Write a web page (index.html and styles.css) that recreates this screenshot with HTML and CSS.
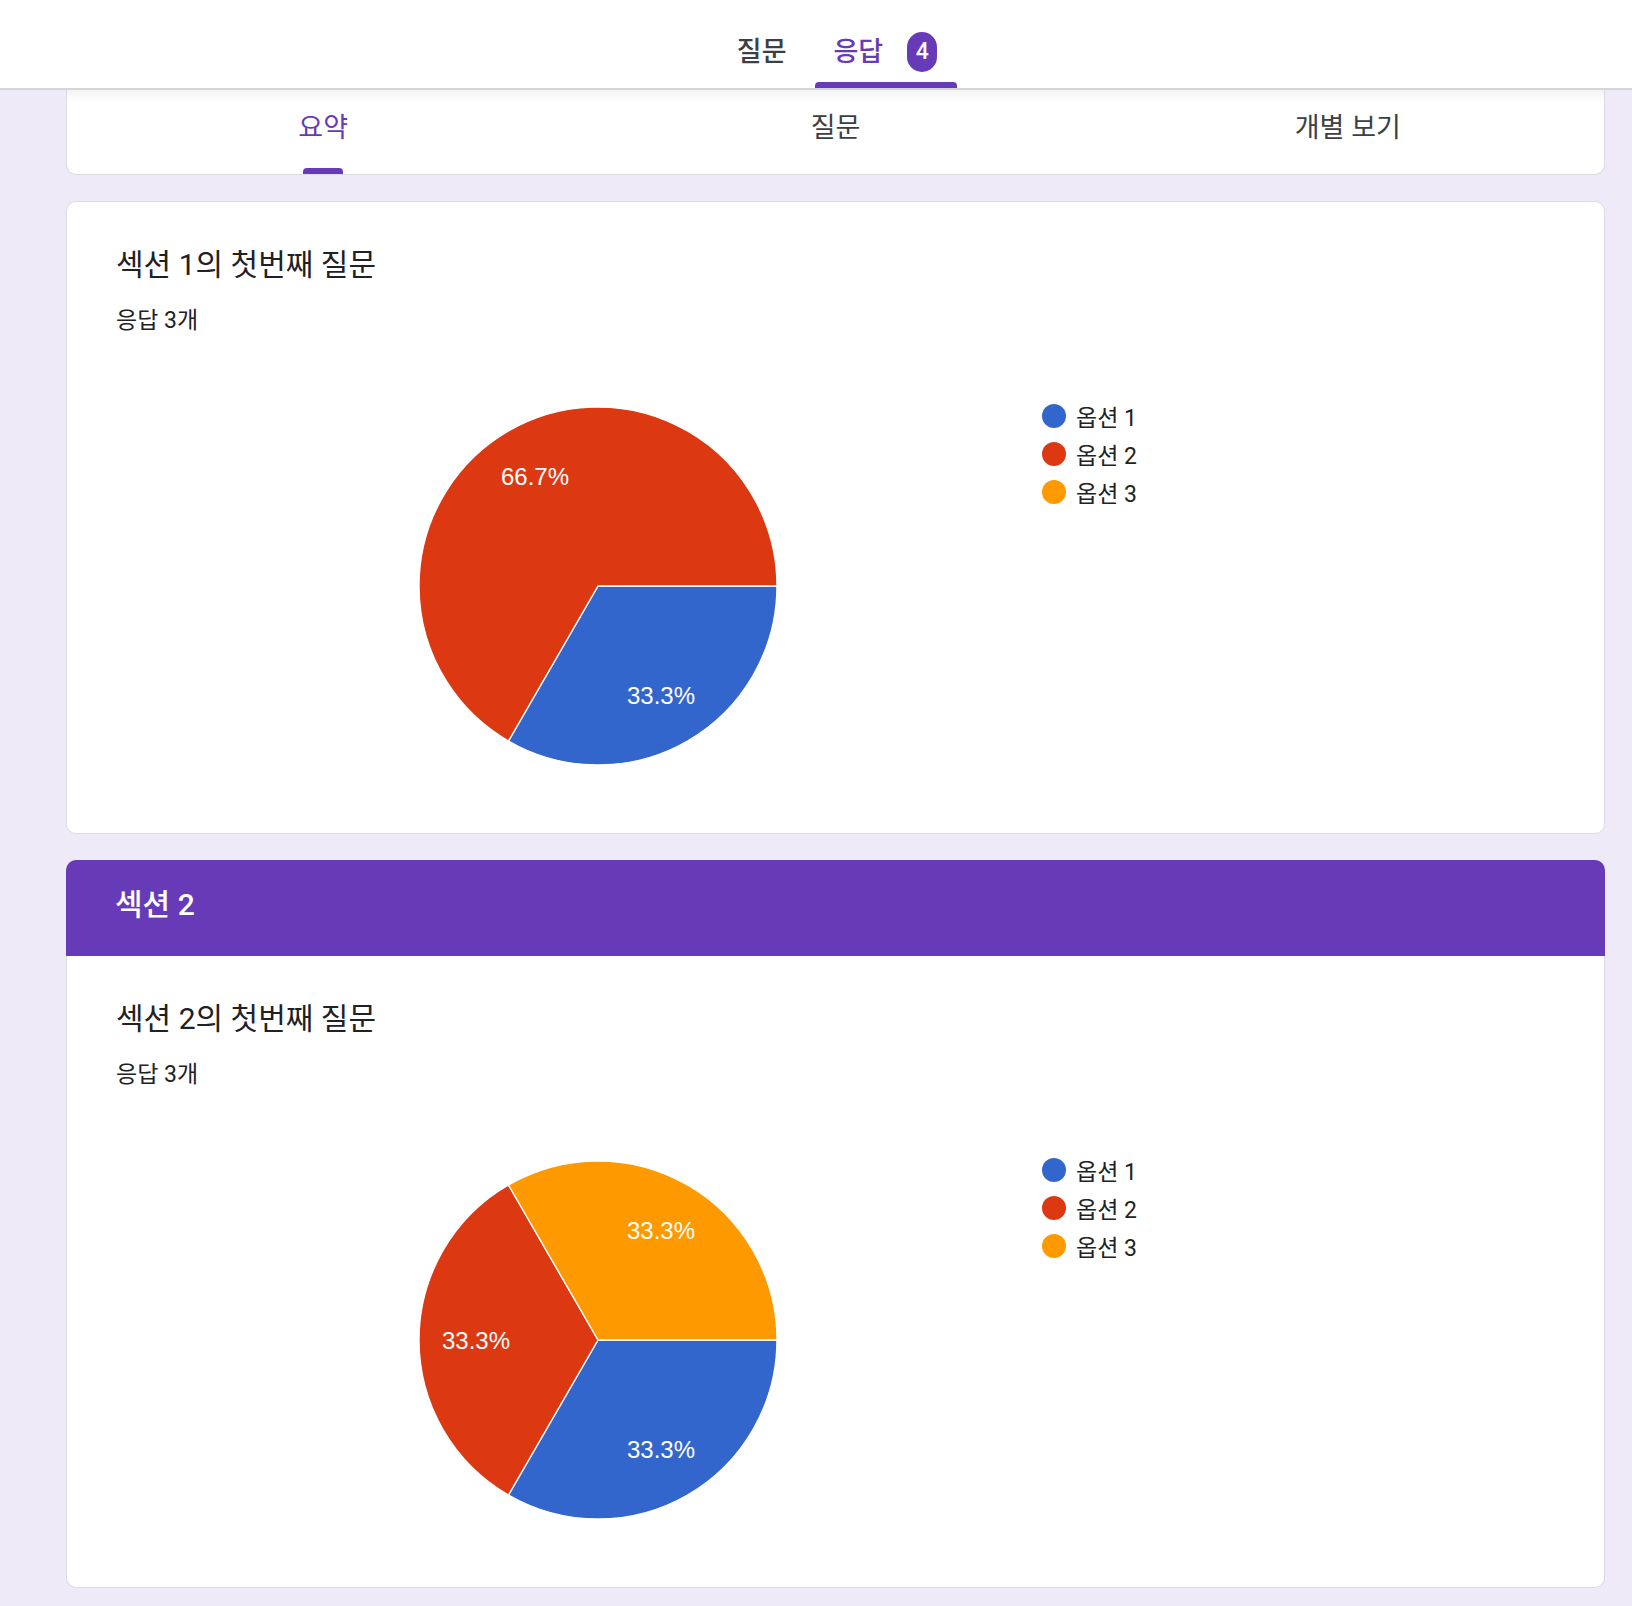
FILE: index.html
```html
<!DOCTYPE html>
<html lang="ko">
<head>
<meta charset="utf-8">
<title>응답 요약</title>
<link rel="stylesheet" href="styles.css">
</head>
<body>
<header class="topbar">
  <nav class="top-tabs">
    <div class="top-tab">
      <div class="top-tab-label">질문</div>
      <div class="top-tab-bar"></div>
    </div>
    <div class="top-tab is-active">
      <div class="top-tab-label">응답<span class="badge">4</span></div>
      <div class="top-tab-bar"></div>
    </div>
  </nav>
</header>

<main class="content">
  <div class="subtabs">
    <div class="subtab is-active">
      <div class="subtab-label">요약</div>
      <div class="subtab-bar"></div>
    </div>
    <div class="subtab">
      <div class="subtab-label">질문</div>
      <div class="subtab-bar"></div>
    </div>
    <div class="subtab">
      <div class="subtab-label">개별 보기</div>
      <div class="subtab-bar"></div>
    </div>
  </div>

  <section class="card">
    <h2 class="q-title">섹션 1의 첫번째 질문</h2>
    <div class="q-count">응답 3개</div>
    <div class="chart-row">
      <svg class="pie" width="360" height="360" viewBox="0 0 360 360">
        <path class="slice-blue" d="M180,180 L359,180 A179,179 0 0 1 90.5,335.02 Z"/>
        <path class="slice-red" d="M180,180 L90.5,335.02 A179,179 0 1 1 359,180 Z"/>
        <text class="pie-label" x="243" y="297.6">33.3%</text>
        <text class="pie-label" x="117" y="79.4">66.7%</text>
      </svg>
      <ul class="legend">
        <li class="legend-item"><span class="dot dot-blue"></span>옵션 1</li>
        <li class="legend-item"><span class="dot dot-red"></span>옵션 2</li>
        <li class="legend-item"><span class="dot dot-orange"></span>옵션 3</li>
      </ul>
    </div>
  </section>

  <section class="section">
    <div class="section-head">섹션 2</div>
    <div class="card card-attached">
      <h2 class="q-title">섹션 2의 첫번째 질문</h2>
      <div class="q-count">응답 3개</div>
      <div class="chart-row">
        <svg class="pie" width="360" height="360" viewBox="0 0 360 360">
          <path class="slice-blue" d="M180,180 L359,180 A179,179 0 0 1 90.5,335.02 Z"/>
          <path class="slice-red" d="M180,180 L90.5,335.02 A179,179 0 0 1 90.5,24.98 Z"/>
          <path class="slice-orange" d="M180,180 L90.5,24.98 A179,179 0 0 1 359,180 Z"/>
          <text class="pie-label" x="243" y="297.6">33.3%</text>
          <text class="pie-label" x="58" y="188.5">33.3%</text>
          <text class="pie-label" x="243" y="79.4">33.3%</text>
        </svg>
        <ul class="legend">
          <li class="legend-item"><span class="dot dot-blue"></span>옵션 1</li>
          <li class="legend-item"><span class="dot dot-red"></span>옵션 2</li>
          <li class="legend-item"><span class="dot dot-orange"></span>옵션 3</li>
        </ul>
      </div>
    </div>
  </section>
</main>
</body>
</html>
```

FILE: styles.css
```css
html {
  background: #eeeaf7;
}

body {
  margin: 0;
  font-family: Roboto, "Noto Sans CJK KR", sans-serif;
  color: #202124;
}

/* ---------- top bar ---------- */
.topbar {
  background: #ffffff;
  height: 88px;
  border-bottom: 2px solid #d6d6d9;
}

.top-tabs {
  display: flex;
  justify-content: center;
  gap: 12px;
  height: 88px;
  padding-left: 46px;
}

.top-tab {
  display: flex;
  flex-direction: column;
}

.top-tab-label {
  flex: 1;
  display: flex;
  align-items: center;
  padding: 22px 16px 0 16px;
  font-size: 27px;
  line-height: 30px;
  font-weight: 500;
  color: #3c4043;
}

.top-tab-bar {
  height: 6px;
  border-radius: 4px 4px 0 0;
}

.top-tab.is-active .top-tab-label {
  color: #673ab7;
  padding-left: 19px;
  padding-right: 20px;
}

.top-tab.is-active .top-tab-bar {
  background: #673ab7;
}

.badge {
  display: inline-flex;
  align-items: center;
  justify-content: center;
  margin-left: 24px;
  width: 30px;
  height: 40px;
  border-radius: 15px;
  background: #673ab7;
  color: #ffffff;
  font-size: 23px;
  font-weight: 500;
}

/* ---------- content ---------- */
.content {
  padding: 0 27px 18px 66px;
}

.subtabs {
  display: grid;
  grid-template-columns: 1fr 1fr 1fr;
  background: linear-gradient(#f3f3f4 0, #ffffff 12px);
  border: 1px solid #dadce0;
  border-top: none;
  border-radius: 0 0 10px 10px;
  margin-bottom: 26px;
}

.subtab {
  display: flex;
  flex-direction: column;
  align-items: center;
}

.subtab-label {
  padding-top: 23px;
  font-size: 27px;
  line-height: 30px;
  color: #3c4043;
}

.subtab-bar {
  margin-top: 25px;
  width: 40px;
  height: 6px;
  border-radius: 4px 4px 0 0;
}

.subtab.is-active .subtab-label {
  color: #673ab7;
}

.subtab.is-active .subtab-bar {
  background: #673ab7;
}

.card {
  background: #ffffff;
  border: 1px solid #dadce0;
  border-radius: 10px;
  padding: 45px 49px 67px 49px;
}

.card-attached {
  border-top: none;
  border-radius: 0 0 10px 10px;
}

.q-title {
  margin: 0;
  font-size: 30px;
  line-height: 36px;
  font-weight: 400;
  color: #202124;
}

.q-count {
  margin-top: 24px;
  font-size: 23px;
  line-height: 28px;
  color: #202124;
}

.chart-row {
  display: flex;
  align-items: flex-start;
  margin-top: 62px;
}

.pie {
  display: block;
  margin-top: 9px;
  margin-left: 302px;
}

.slice-blue { fill: #3366cc; stroke: #ffffff; stroke-width: 1.4; }
.slice-red { fill: #dc3912; stroke: #ffffff; stroke-width: 1.4; }
.slice-orange { fill: #ff9900; stroke: #ffffff; stroke-width: 1.4; }

.pie-label {
  font-family: "Liberation Sans", Arial, sans-serif;
  font-size: 24px;
  fill: #ffffff;
  text-anchor: middle;
}

.legend {
  list-style: none;
  margin: 0 0 0 264px;
  padding: 0;
}

.legend-item {
  display: flex;
  align-items: center;
  gap: 10px;
  height: 38px;
  font-size: 23px;
  color: #222222;
}

.dot {
  width: 24px;
  height: 24px;
  border-radius: 50%;
}

.dot-blue { background: #3366cc; }
.dot-red { background: #dc3912; }
.dot-orange { background: #ff9900; }

.section {
  margin-top: 26px;
}

.section-head {
  background: #673ab7;
  color: #ffffff;
  border-radius: 10px 10px 0 0;
  padding: 27px 49px 33px 49px;
  font-size: 30px;
  line-height: 36px;
  font-weight: 500;
}
```
